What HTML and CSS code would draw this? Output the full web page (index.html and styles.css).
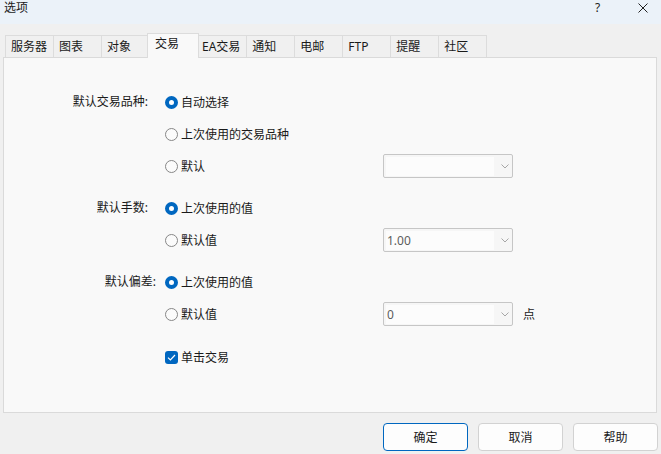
FILE: index.html
```html
<!DOCTYPE html>
<html lang="zh-CN">
<head>
<meta charset="utf-8">
<title>选项</title>
<link rel="stylesheet" href="styles.css">
</head>
<body>
<div class="titlebar">
  <span class="title">选项</span>
  <span class="help">?</span>
  <svg class="close" width="10" height="10" viewBox="0 0 10 10"><path d="M0.5 0.5 L9.5 9.5 M9.5 0.5 L0.5 9.5" stroke="#222" stroke-width="1" fill="none"/></svg>
</div>
<div class="tabs">
  <div class="tab">服务器</div>
  <div class="tab">图表</div>
  <div class="tab">对象</div>
  <div class="tab active">交易</div>
  <div class="tab">EA交易</div>
  <div class="tab">通知</div>
  <div class="tab">电邮</div>
  <div class="tab">FTP</div>
  <div class="tab">提醒</div>
  <div class="tab">社区</div>
</div>
<div class="panel">
  <div class="group">
    <div class="label">默认交易品种:</div>
    <div class="opt"><span class="choice"><span class="radio on"></span>自动选择</span></div>
    <div class="opt col2"><span class="choice"><span class="radio"></span>上次使用的交易品种</span></div>
    <div class="opt col2"><span class="choice"><span class="radio"></span>默认</span>
      <div class="combo"><div class="field"></div><svg class="chev" width="8" height="5" viewBox="0 0 8 5"><path d="M0.5 0.5 L4 4 L7.5 0.5" stroke="#a6a6a6" fill="none"/></svg></div>
    </div>
  </div>
  <div class="group">
    <div class="label">默认手数:</div>
    <div class="opt"><span class="choice"><span class="radio on"></span>上次使用的值</span></div>
    <div class="opt col2"><span class="choice"><span class="radio"></span>默认值</span>
      <div class="combo"><div class="field">1.00</div><svg class="chev" width="8" height="5" viewBox="0 0 8 5"><path d="M0.5 0.5 L4 4 L7.5 0.5" stroke="#a6a6a6" fill="none"/></svg></div>
    </div>
  </div>
  <div class="group">
    <div class="label shift">默认偏差:</div>
    <div class="opt"><span class="choice"><span class="radio on"></span>上次使用的值</span></div>
    <div class="opt col2"><span class="choice"><span class="radio"></span>默认值</span>
      <div class="combo"><div class="field">0</div><svg class="chev" width="8" height="5" viewBox="0 0 8 5"><path d="M0.5 0.5 L4 4 L7.5 0.5" stroke="#a6a6a6" fill="none"/></svg></div>
      <span class="unit">点</span>
    </div>
  </div>
  <div class="group last">
    <div class="opt col2"><span class="choice"><span class="check"><svg width="9" height="7" viewBox="0 0 9 7"><path d="M1 3.6 L3.4 6 L8 1" stroke="#fff" stroke-width="1.2" fill="none"/></svg></span>单击交易</span></div>
  </div>
</div>
<div class="buttons">
  <button class="btn primary">确定</button>
  <button class="btn">取消</button>
  <button class="btn">帮助</button>
</div>
</body>
</html>
```
FILE: styles.css
```css
* { box-sizing: border-box; }
html, body { margin: 0; padding: 0; }
body {
  width: 661px;
  height: 454px;
  overflow: hidden;
  background: #f0f0f0;
  font-family: "Noto Sans", "Noto Sans CJK SC", sans-serif;
  font-size: 12px;
  color: #1a1a1a;
}
.titlebar {
  height: 24px;
  background: #ebf2f9;
  display: flex;
  align-items: flex-start;
  padding-left: 4px;
  line-height: 16px;
}
.title { flex: 1; }
.help { width: 8px; margin-right: 35px; color: #222; font-size: 12px; }
.close { margin-top: 3px; margin-right: 13px; }
.tabs {
  margin-top: 9px;
  height: 24px;
  display: flex;
  align-items: flex-end;
  padding-left: 6px;
}
.tab {
  height: 22px;
  min-width: 49px;
  padding: 0 6px 0 5px;
  margin-left: -1px;
  border: 1px solid #dcdcdc;
  border-bottom: none;
  background: #f0f0f0;
  line-height: 21px;
  white-space: nowrap;
}
.tab.active {
  height: 25px;
  margin: 0 -2px -1px -3px;
  padding-left: 7px;
  min-width: 52px;
  background: #f9f9f9;
  position: relative;
  z-index: 1;
  line-height: 20px;
}
.panel {
  margin: 0 4px 0 3px;
  height: 356px;
  border: 1px solid #dadada;
  background: #f9f9f9;
  padding-top: 28px;
  display: flex;
  flex-direction: column;
  gap: 10px;
}
.group {
  display: grid;
  grid-template-columns: 147px 1fr;
  grid-auto-rows: 32px;
  column-gap: 14px;
}
.group.last { margin-top: 1px; }
.label {
  text-align: right;
  line-height: 32px;
  white-space: nowrap;
  margin-right: 3px;
}
.label.shift { margin-right: -5px; }
.opt {
  display: flex;
  align-items: center;
}
.col2 { grid-column: 2; }
.choice {
  width: 218px;
  display: flex;
  align-items: center;
  gap: 3px;
  white-space: nowrap;
}
.radio {
  width: 13px;
  height: 13px;
  border-radius: 50%;
  border: 1px solid #878787;
  background: #fbfbfb;
  flex: none;
}
.radio.on {
  border: 4px solid #0067c0;
  background: #ffffff;
}
.check {
  width: 13px;
  height: 13px;
  border-radius: 3px;
  background: #0067c0;
  display: flex;
  align-items: center;
  justify-content: center;
  flex: none;
}
.combo {
  width: 130px;
  height: 24px;
  border: 1px solid #c6c6c6;
  border-radius: 2px;
  background: #f6f6f6;
  padding: 2px;
  display: flex;
  align-items: center;
}
.field {
  width: 108px;
  height: 19px;
  background: #fcfcfc;
  line-height: 19px;
  padding-left: 1px;
  color: #5c5c5c;
}
.chev { margin-left: 7px; }
.unit { margin-left: 10px; }
.buttons {
  display: flex;
  justify-content: flex-end;
  gap: 10px;
  margin-top: 10px;
  padding-right: 3px;
}
.btn {
  width: 85px;
  height: 28px;
  border: 1px solid #d2d2d2;
  border-radius: 4px;
  background: #fdfdfd;
  font-family: "Noto Sans", "Noto Sans CJK SC", sans-serif;
  font-size: 12px;
  color: #1a1a1a;
  padding: 0;
}
.btn.primary { border-color: #0067c0; }
```
